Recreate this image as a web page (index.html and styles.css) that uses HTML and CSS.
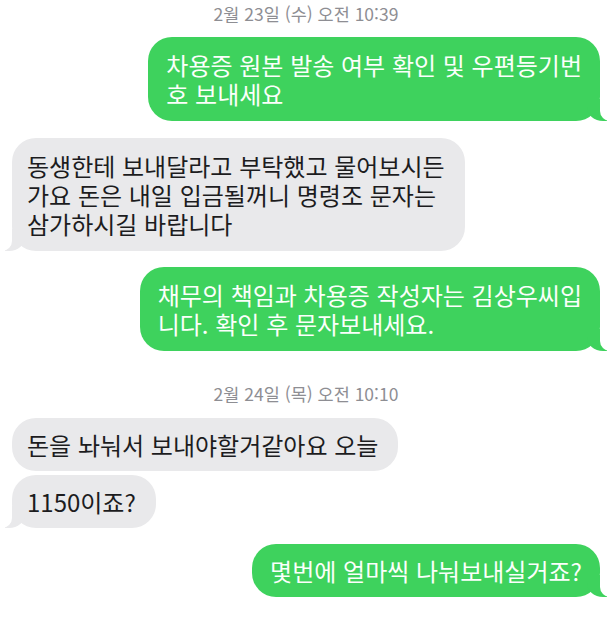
FILE: index.html
```html
<!DOCTYPE html>
<html lang="ko">
<head>
    <meta charset="UTF-8">
    <meta name="viewport" content="width=device-width, initial-scale=1.0">
    <title>메시지</title>
    <link rel="stylesheet" href="styles.css">
</head>
<body>
    <div class="chat">
        <div class="stamp">2월 23일 (수) 오전 10:39</div>

        <div class="bubble me tail">차용증 원본 발송 여부 확인 및 우편등기번<br>호 보내세요</div>

        <div class="bubble them tail">동생한테 보내달라고 부탁했고 물어보시든<br>가요 돈은 내일 입금될꺼니 명령조 문자는<br>삼가하시길 바랍니다</div>

        <div class="bubble me tail">채무의 책임과 차용증 작성자는 김상우씨입<br>니다. 확인 후 문자보내세요.</div>

        <div class="stamp stamp-gap">2월 24일 (목) 오전 10:10</div>

        <div class="bubble them single">돈을 놔눠서 보내야할거같아요 오늘</div>
        <div class="bubble them single tail">1150이죠?</div>

        <div class="bubble me single tail">몇번에 얼마씩 나눠보내실거죠?</div>
    </div>
</body>
</html>
```

FILE: styles.css
```css
body {
    margin: 0;
    padding: 0;
    background-color: #fff;
    font-family: "Noto Sans CJK KR", "Noto Sans", sans-serif;
}

.chat {
    display: flex;
    flex-direction: column;
    padding: 4px 8px 0 12px;
}

.stamp {
    align-self: center;
    font-size: 17.5px;
    line-height: 20px;
    color: #8e8e93;
    margin-bottom: 13px;
}

.stamp-gap {
    margin-top: 16px;
    margin-bottom: 14px;
}

.bubble {
    position: relative;
    font-size: 24px;
    line-height: 29px;
    padding: 13px 18px;
    border-radius: 24px;
    margin-bottom: 17px;
}

.bubble.single {
    padding-top: 12px;
    padding-bottom: 12px;
}

.bubble.me {
    align-self: flex-end;
    background-color: #3ed25d;
    color: #fbfffb;
}

.bubble.them {
    align-self: flex-start;
    background-color: #e9e9eb;
    color: #1c1c1e;
    padding-left: 15px;
    padding-right: 20px;
    margin-bottom: 4px;
}

.bubble.them.tail {
    margin-bottom: 16px;
}

/* iOS style tails */
.bubble.tail::before,
.bubble.tail::after {
    content: "";
    position: absolute;
    bottom: 0;
    height: 22px;
}

.bubble.me.tail::before {
    right: -7px;
    width: 20px;
    background-color: #3ed25d;
    border-bottom-left-radius: 16px 14px;
}

.bubble.me.tail::after {
    right: -26px;
    width: 26px;
    background-color: #fff;
    border-bottom-left-radius: 10px;
}

.bubble.them.tail::before {
    left: -7px;
    width: 20px;
    background-color: #e9e9eb;
    border-bottom-right-radius: 16px 14px;
}

.bubble.them.tail::after {
    left: -26px;
    width: 26px;
    background-color: #fff;
    border-bottom-right-radius: 10px;
}
```
